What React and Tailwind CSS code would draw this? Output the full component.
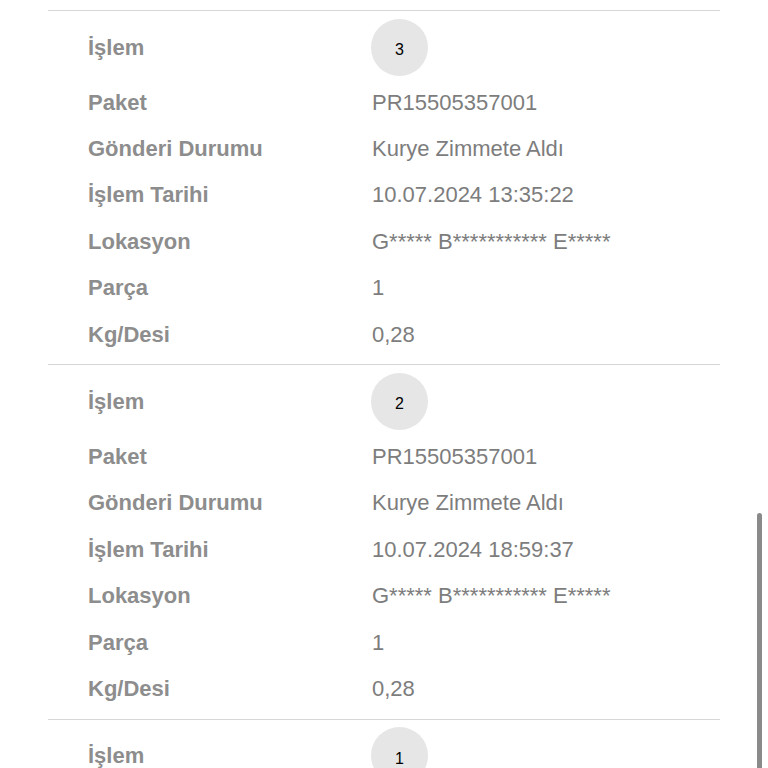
import React from "react";

const sections = [
  { n: "3", date: "10.07.2024 13:35:22" },
  { n: "2", date: "10.07.2024 18:59:37" },
  { n: "1", date: "10.07.2024 18:59:37" },
];

function Row({ label, value }) {
  return (
    <div className="flex h-[46.4px] items-center">
      <div className="w-[324px] shrink-0 pl-[40px] font-bold text-[#8d8d8d]">{label}</div>
      <div className="text-[#7d7d7d]">{value}</div>
    </div>
  );
}

function Section({ n, date }) {
  return (
    <div className="border-t border-[#d6d6d6] pt-[4px] pb-[7px]">
      <div className="flex h-[64px] items-center">
        <div className="w-[323px] shrink-0 pl-[40px] font-bold text-[#8d8d8d]">İşlem</div>
        <div className="flex h-[57px] w-[57px] items-center justify-center rounded-full bg-[#e6e6e6] pt-[6px] text-[16px] text-black">
          {n}
        </div>
      </div>
      <Row label="Paket" value="PR15505357001" />
      <Row label="Gönderi Durumu" value="Kurye Zimmete Aldı" />
      <Row label="İşlem Tarihi" value={date} />
      <Row label="Lokasyon" value="G***** B*********** E*****" />
      <Row label="Parça" value="1" />
      <Row label="Kg/Desi" value="0,28" />
    </div>
  );
}

export default function App() {
  return (
    <div
      className="relative h-[768px] w-[768px] overflow-hidden bg-white text-[22px]"
      style={{ fontFamily: '"Liberation Sans", Arial, sans-serif' }}
    >
      <div className="ml-[48px] mr-[48px] pt-[10px]">
        {sections.map((s) => (
          <Section key={s.n} n={s.n} date={s.date} />
        ))}
      </div>
      <div className="absolute left-[757px] top-[513px] h-[260px] w-[5px] rounded-full bg-[#8a8a8a]" />
    </div>
  );
}
